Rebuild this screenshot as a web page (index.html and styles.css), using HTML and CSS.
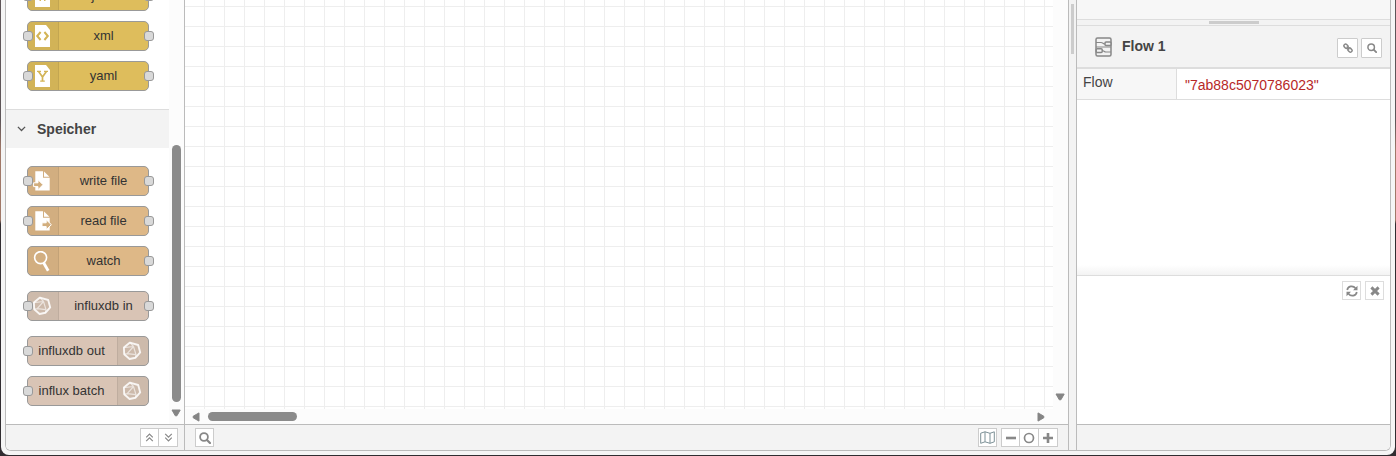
FILE: index.html
```html
<!DOCTYPE html>
<html lang="de">
<head>
<meta charset="utf-8">
<title>Node-RED</title>
<link rel="stylesheet" href="styles.css">
</head>
<body>
<svg width="0" height="0" class="defs">
  <symbol id="influx" viewBox="0 0 20 20">
    <g fill="none" stroke="#fff" stroke-linejoin="round">
      <path stroke-width="1.9" opacity=".85" d="M8 1.6 16.2 4 18.2 11.4 13.4 16.8 7.6 18 2.2 13.2 1.9 6.6Z"/>
      <path stroke-width="1.2" opacity=".6" d="M11.5 5.5 5.2 12.6 14 13.6ZM11.5 5.5 8 1.6M5.2 12.6 2.2 13.2M14 13.6l-.6 3.2M1.9 6.6 11.5 5.5"/>
    </g>
  </symbol>
  <symbol id="search" viewBox="0 0 12 12">
    <circle cx="5" cy="5" r="3.9" fill="none" stroke="#888" stroke-width="1.8"/>
    <path d="M8 8l3 3" stroke="#888" stroke-width="2.2" stroke-linecap="round"/>
  </symbol>
  <symbol id="arrow-down" viewBox="0 0 10 8"><path d="M1 1h8.2L5.9 6.8H4.3z" fill="#858585" stroke="#858585" stroke-linejoin="round"/></symbol>
</svg>
<div class="window">
  <div class="app">
    <aside class="palette">
      <div class="palette-main">
        <div class="palette-list">
          <div class="nodes parsers">
            <div class="node gold"><i class="port in"></i><span class="icon"><svg width="16" height="22" viewBox="0 0 16 22"><path fill="#fff" d="M0 0h11l4 5v17H0z"/><path d="M6 7c-3 0-1 4-3 4 2 0 0 4 3 4M9 7c3 0 1 4 3 4-2 0 0 4-3 4" fill="none" stroke="#d3b456" stroke-width="1.8"/></svg></span><span class="label">json</span><i class="port out"></i></div>
            <div class="node gold"><i class="port in"></i><span class="icon"><svg width="16" height="22" viewBox="0 0 16 22"><path fill="#fff" d="M0 0h11l4 5v17H0z"/><path d="M5.6 7 2.2 11l3.4 4M9.4 7l3.4 4-3.4 4" fill="none" stroke="#d3b456" stroke-width="2"/></svg></span><span class="label">xml</span><i class="port out"></i></div>
            <div class="node gold"><i class="port in"></i><span class="icon"><svg width="16" height="22" viewBox="0 0 16 22"><path fill="#fff" d="M0 0h11l4 5v17H0z"/><path d="M3.6 6.5 7.5 12l3.9-5.5M7.5 12v4" fill="none" stroke="#d3b456" stroke-width="1.7"/><path d="M2 6.4h4M9 6.4h4M5.2 16.2h4.6" stroke="#d3b456" stroke-width="1.2"/></svg></span><span class="label">yaml</span><i class="port out"></i></div>
          </div>
          <div class="category"><svg width="9" height="6" viewBox="0 0 9 6"><path d="M.9.9 4.5 4.5 8.1.9" fill="none" stroke="#555" stroke-width="1.3"/></svg><span>Speicher</span></div>
          <div class="nodes storage">
            <div class="node tan"><i class="port in"></i><span class="icon file"><svg width="20" height="20" viewBox="0 0 20 20"><path fill="#fff" d="M2.3.3h7.7v6.4h6.7v12.8H2.3z"/><path fill="#fff" d="M11 .5l5.4 5.2H11z"/><path d="M.6 11.8H5V8.7l5 5-5 5v-3.1H.6z" fill="#d2ae7e" stroke="#fff"/></svg></span><span class="label">write file</span><i class="port out"></i></div>
            <div class="node tan"><i class="port in"></i><span class="icon file"><svg width="20" height="20" viewBox="0 0 20 20"><path fill="#fff" d="M2.3.3h7.7v6.4h6.7v12.8H2.3z"/><path fill="#fff" d="M11 .5l5.4 5.2H11z"/><path d="M9 11.8h4.2V8.7l5.2 5-5.2 5v-3.1H9z" fill="#d2ae7e" stroke="#fff"/></svg></span><span class="label">read file</span><i class="port out"></i></div>
            <div class="node tan"><span class="icon file"><svg width="20" height="22" viewBox="0 0 20 22"><circle cx="7.6" cy="6.6" r="6" fill="none" stroke="#fff" stroke-width="1.6"/><path d="m10.6 11.8 4.6 8" stroke="#fff" stroke-width="2.8"/></svg></span><span class="label">watch</span><i class="port out"></i></div>
            <div class="node rose spaced"><i class="port in"></i><span class="icon file influx-in"><svg width="20" height="20"><use href="#influx"/></svg></span><span class="label">influxdb in</span><i class="port out"></i></div>
            <div class="node rose spaced"><i class="port in"></i><span class="label out-label">influxdb out</span><span class="icon right"><svg width="20" height="20"><use href="#influx"/></svg></span></div>
            <div class="node rose"><i class="port in"></i><span class="label out-label">influx batch</span><span class="icon right"><svg width="20" height="20"><use href="#influx"/></svg></span></div>
          </div>
        </div>
        <div class="vscroll"><div class="vthumb"></div><svg width="10" height="8"><use href="#arrow-down"/></svg></div>
      </div>
      <div class="footer palette-footer">
        <button class="btn"><svg width="9" height="9" viewBox="0 0 9 9"><path d="M1.2 4.3 4.5 1l3.3 3.3M1.2 8.2l3.3-3.3 3.3 3.3" fill="none" stroke="#888" stroke-width="1.2"/></svg></button><button class="btn"><svg width="9" height="9" viewBox="0 0 9 9"><path d="M1.2.8l3.3 3.3L7.8.8M1.2 4.7 4.5 8l3.3-3.3" fill="none" stroke="#888" stroke-width="1.2"/></svg></button>
      </div>
    </aside>
    <main class="workspace">
      <div class="canvas-row">
        <div class="grid"></div>
        <div class="canvas-vscroll"><svg width="10" height="8"><use href="#arrow-down"/></svg></div>
      </div>
      <div class="hscroll">
        <svg width="8" height="10" viewBox="0 0 8 10"><path d="M7 .9v8.2L1.2 5.8V4.2z" fill="#858585" stroke="#858585" stroke-linejoin="round"/></svg>
        <div class="hthumb"></div>
        <svg class="arrow-right" width="8" height="10" viewBox="0 0 8 10"><path d="M1 .9v8.2l5.8-3.3V4.2z" fill="#858585" stroke="#858585" stroke-linejoin="round"/></svg>
      </div>
      <div class="footer workspace-footer">
        <button class="btn"><svg width="12" height="12"><use href="#search"/></svg></button>
        <div class="view-tools">
          <button class="btn map"><svg width="15" height="13" viewBox="0 0 15 13"><path d="M.7 2.2 5 .8l5 1.5L14.3.8v10L10 12.3 5 10.8.7 12.3zM5 .8v10M10 2.3v10" fill="none" stroke="#7d9197" stroke-width="1"/></svg></button>
          <div class="group"><button class="btn"><svg width="12" height="12" viewBox="0 0 12 12"><path d="M1 6h10" stroke="#888" stroke-width="2.6"/></svg></button><button class="btn"><svg width="12" height="12" viewBox="0 0 12 12"><circle cx="6" cy="6" r="4.5" fill="none" stroke="#888" stroke-width="1.7"/></svg></button><button class="btn"><svg width="12" height="12" viewBox="0 0 12 12"><path d="M1 6h10M6 1v10" stroke="#888" stroke-width="2.6"/></svg></button></div>
        </div>
      </div>
    </main>
    <div class="separator"><div class="handle"></div></div>
    <aside class="sidebar">
      <div class="outline"></div>
      <div class="splitter"><div class="grip"></div></div>
      <div class="info-header">
        <svg width="17" height="20" viewBox="0 0 17 20"><g fill="none" stroke="#888"><rect x="1" y="1" width="15" height="18" rx="1.5" stroke-width="1.5"/><path d="M1 5.5h5c2 0 2 1.5 4 1.5M1 10h15M7 13.5c2 0 2 1.5 4 1.5h5" stroke-width="1.1"/><rect x="10" y="5" width="6" height="3.6" rx="1" fill="#f3f3f3" stroke-width="1.5"/><rect x="1.2" y="11.8" width="6" height="3.6" rx="1" fill="#f3f3f3" stroke-width="1.5"/></g></svg>
        <span class="title">Flow 1</span>
        <button class="btn tall"><svg width="10" height="10" viewBox="0 0 11 11"><g fill="none" stroke="#888" stroke-width="1.6"><rect x="1" y="1.7" width="4.8" height="3.6" rx="1.6" transform="rotate(45 3.3 3.4)"/><rect x="5.4" y="5.9" width="4.8" height="3.6" rx="1.6" transform="rotate(45 7.7 7.6)"/><path d="m4 4 3 3"/></g></svg></button>
        <button class="btn tall"><svg width="10" height="10"><use href="#search" width="10" height="10"/></svg></button>
      </div>
      <div class="prop"><div class="prop-name">Flow</div><div class="prop-value">"7ab88c5070786023"</div></div>
      <div class="blank"></div>
      <div class="tips">
        <button class="btn"><svg width="12" height="12" viewBox="0 0 12 12"><path d="M1.2 5C1.8 1 7 0 9.5 3.2M10.8 7C10.2 11 5 12 2.5 8.8" fill="none" stroke="#888" stroke-width="1.7"/><path d="M11.5.7v4.5H7zM.5 11.3V6.8H5z" fill="#888"/></svg></button>
        <button class="btn"><svg width="10" height="10" viewBox="0 0 10 10"><path d="m1.4 1.4 7.2 7.2m0-7.2L1.4 8.6" stroke="#888" stroke-width="2.9"/></svg></button>
      </div>
      <div class="footer"></div>
    </aside>
  </div>
</div>
</body>
</html>
```
FILE: styles.css
```css
* { box-sizing: border-box; }
body {
  margin: 0;
  height: 456px;
  padding: 0 1px 1px;
  overflow: hidden;
  background: linear-gradient(#5d5558 0 120px, #a07868 150px 220px, #302c30 224px);
  font: 14px "Liberation Sans", Arial, sans-serif;
  color: #444;
}
.defs { position: absolute; }
svg { display: block; flex: none; }
.window {
  height: 455px;
  padding: 0 4px 4px;
  background: #f5f5f5;
  border-radius: 0 0 8px 8px;
}
.app {
  display: flex;
  height: 451px;
  border: 1px solid #bbb;
  border-top: 0;
  border-radius: 0 0 6px 6px;
  overflow: hidden;
  background: #f3f3f3;
}
.footer {
  height: 26px;
  flex: none;
  border-top: 1px solid #bbb;
  background: #f3f3f3;
}
.btn {
  width: 19px;
  height: 19px;
  padding: 0;
  display: flex;
  align-items: center;
  justify-content: center;
  flex: none;
  background: #fff;
  border: 1px solid #ccc;
}
.btn + .btn { margin-left: -1px; }

.palette {
  width: 179px;
  display: flex;
  flex-direction: column;
  border-right: 1px solid #bbb;
  background: #fff;
}
.palette-main { height: 424px; display: flex; overflow: hidden; }
.palette-list { width: 163px; }
.parsers { margin-top: -19px; height: 128px; }
.nodes { padding-left: 21px; }
.storage { padding-top: 18px; }
.node {
  position: relative;
  display: flex;
  width: 122px;
  height: 30px;
  margin-bottom: 10px;
  border: 1px solid #999;
  border-radius: 5px;
  font-size: 13px;
  line-height: 27px;
  color: #333;
}
.spaced { margin-top: 15px; }
.gold { background: #debd5c; }
.tan { background: #deb887; }
.rose { background: #d9c4b5; }
.icon {
  width: 31px;
  height: 28px;
  padding: 3px 0 0 7px;
  background: rgba(0, 0, 0, .05);
  border-right: 1px solid rgba(0, 0, 0, .07);
  border-radius: 4px 0 0 4px;
}
.icon.file { padding: 4px 0 0 5px; }
.icon.influx-in { padding-left: 4px; }
.icon.right {
  padding: 4px 0 0 4px;
  border-right: 0;
  border-left: 1px solid rgba(0, 0, 0, .07);
  border-radius: 0 4px 4px 0;
}
.label { flex: 1; text-align: center; white-space: nowrap; }
.out-label { padding-right: 2px; }
.port {
  position: absolute;
  top: 9px;
  width: 10px;
  height: 10px;
  border: 1px solid #999;
  border-radius: 3px;
  background: #d9d9d9;
}
.in { left: -5px; }
.out { right: -6px; }
.category {
  height: 39px;
  display: flex;
  align-items: center;
  padding-left: 11px;
  gap: 11px;
  border-top: 1px solid #ddd;
  background: #f3f3f3;
  font-weight: bold;
}
.vscroll { width: 15px; padding: 145px 0 0 3px; background: #fcfcfc; }
.vthumb { width: 9px; height: 257px; margin-bottom: 7px; border-radius: 5px; background: #8b8b8b; }
.vscroll svg { margin-left: -1px; }
.palette-footer { display: flex; justify-content: flex-end; padding: 3px 6px 0 0; }
.palette-footer .btn:last-child { width: 20px; }

.workspace { width: 884px; border-right: 1px solid #bbb; background: #fcfcfc; }
.canvas-row { display: flex; height: 409px; }
.grid {
  width: 868px;
  background-color: #fff;
  background-image: linear-gradient(90deg, transparent 19px, #eee 19px), linear-gradient(#eee 1px, transparent 1px);
  background-size: 20px 20px;
  background-position: 0 0, 0 6px;
}
.canvas-vscroll { display: flex; align-items: flex-end; padding: 0 0 8px 2px; }
.hscroll { height: 15px; display: flex; align-items: center; padding-left: 7px; }
.hthumb { width: 89px; height: 9px; margin-left: 8px; border-radius: 5px; background: #8b8b8b; }
.arrow-right { margin-left: auto; margin-right: 23px; }
.workspace-footer { display: flex; justify-content: space-between; padding: 3px 10px 0 10px; }
.view-tools, .group { display: flex; }
.view-tools { gap: 4px; }
.group .btn:not(:first-child) { width: 20px; }

.separator { width: 7px; padding: 4px 0 0 2px; background: #f3f3f3; }
.handle { width: 3px; height: 50px; background: #ccc; }

.sidebar {
  width: 314px;
  display: flex;
  flex-direction: column;
  border-left: 1px solid #bbb;
  background: #fff;
}
.outline { height: 19px; background: #f7f7f7; }
.splitter { height: 7px; border: solid #ddd; border-width: 1px 0; background: #f3f3f3; }
.grip { width: 50px; height: 3px; margin: 1px auto; background: #ccc; }
.info-header {
  height: 43px;
  display: flex;
  align-items: center;
  padding: 0 8px 0 18px;
  background: #f3f3f3;
  border-bottom: 2px solid #ddd;
}
.title { flex: 1; margin-left: 10px; padding-bottom: 2px; font-weight: bold; }
.btn.tall { width: 21px; height: 20px; margin: 3px 0 0 3px; border-radius: 1px; }
.prop { height: 31px; display: flex; border-bottom: 1px solid #ddd; }
.prop-name { width: 100px; padding: 5px 6px; border-right: 1px solid #ddd; background: #f7f7f7; }
.prop-value { padding: 8px; color: #b72828; }
.blank { height: 175px; background: linear-gradient(#fff 165px, #f3f3f3); }
.tips {
  flex: 1;
  display: flex;
  justify-content: flex-end;
  padding: 5px 6px 0 0;
  gap: 4px;
  border-top: 1px solid #ddd;
}
.tips .btn { margin-left: 0; border-color: #ddd; }
```
